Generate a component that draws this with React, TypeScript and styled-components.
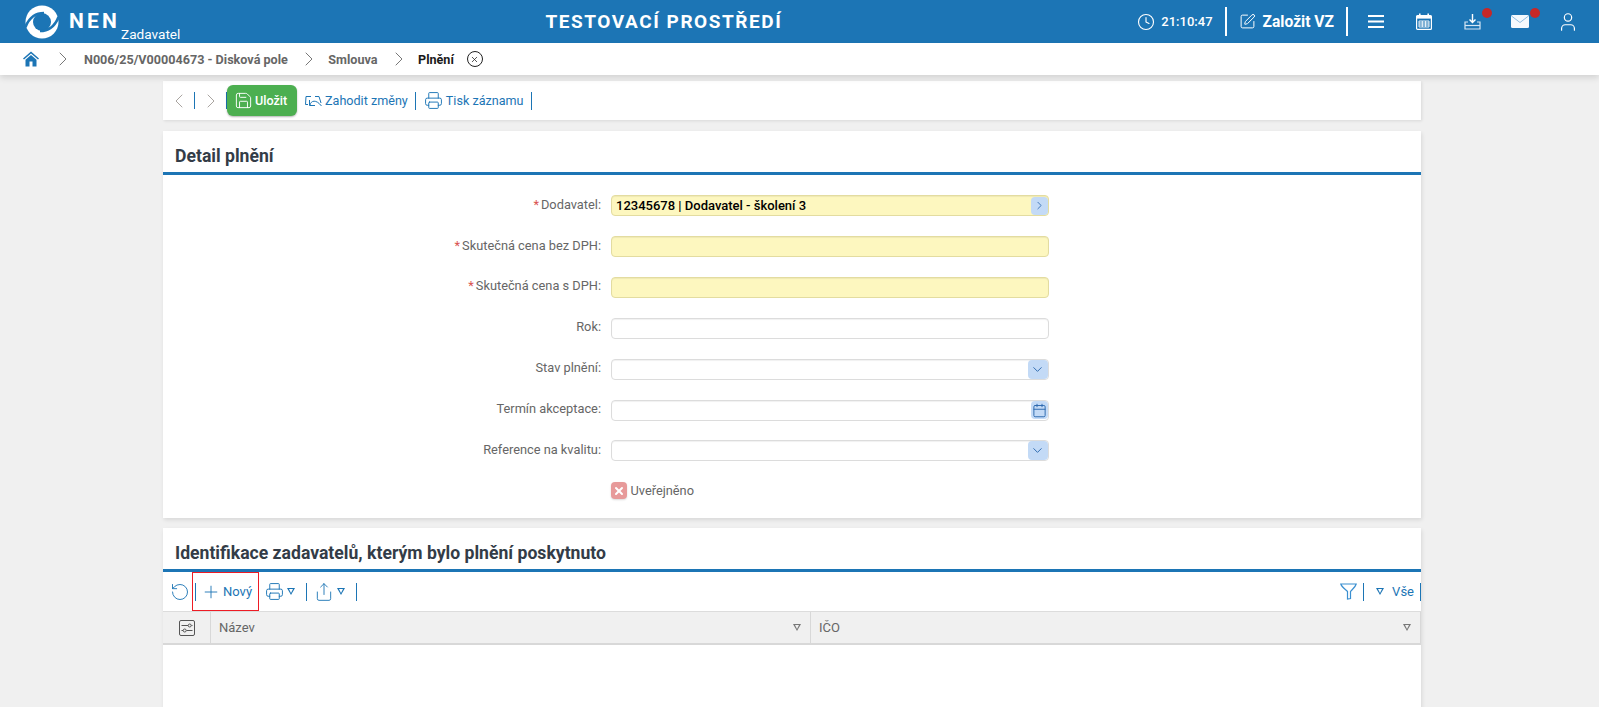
import { Fragment } from "react";
import styled, { createGlobalStyle } from "styled-components";
import {
  Calendar,
  ChevronDown,
  ChevronLeft,
  ChevronRight,
  Clock,
  Plus,
  Printer,
  RotateCcw,
  Save,
  Share,
  SquarePen,
  User,
  X,
} from "lucide-react";

const GlobalStyle = createGlobalStyle`
  html, body {
    margin: 0;
    height: 100%;
    overflow: hidden;
    background: #f0f0f0;
    font-family: Roboto, "Liberation Sans", sans-serif;
    font-size: 13px;
  }
  * { box-sizing: border-box; }
  svg { flex: none; }
`;

const Page = styled.div`
  height: 707px;
  overflow: hidden;
`;

const Header = styled.header`
  height: 43px;
  background: #1c75b5;
  color: #fff;
  display: flex;
  align-items: center;
`;

const Brand = styled.div`
  width: 545.5px;
  height: 43px;
  flex: none;
  display: flex;
  align-items: center;
  padding-left: 25px;
`;

const BrandName = styled.span`
  font-size: 21px;
  font-weight: 700;
  letter-spacing: 3.2px;
  margin-left: 10px;
  margin-top: -2px;
`;

const BrandRole = styled.span`
  font-size: 13.6px;
  align-self: flex-end;
  margin: 0 0 1px 1px;
`;

const EnvTitle = styled.div`
  font-size: 19px;
  font-weight: 700;
  letter-spacing: 1.55px;
  white-space: nowrap;
`;

const HeaderTools = styled.div`
  margin-left: auto;
  display: flex;
  align-items: center;
  padding-right: 7px;
`;

const Time = styled.span`
  font-size: 13px;
  font-weight: 500;
  margin-left: 6px;
`;

const HeaderSep = styled.span`
  width: 2px;
  height: 29px;
  background: #fff;
  margin: 0 12px;
`;

const CreateLabel = styled.span`
  font-size: 15.6px;
  font-weight: 700;
  margin-left: 7px;
`;

const IconGroup = styled.div`
  display: flex;
  align-items: center;
  margin-left: -8px;
`;

const HeaderIcon = styled.span`
  position: relative;
  width: 48px;
  height: 20px;
  display: flex;
  align-items: center;
  justify-content: center;
`;

const Dot = styled.span`
  position: absolute;
  top: -4px;
  left: 34px;
  width: 10px;
  height: 10px;
  border-radius: 50%;
  background: #c62828;
`;

const Crumbs = styled.nav`
  height: 32px;
  background: #fff;
  display: flex;
  align-items: center;
  padding-left: 23px;
  box-shadow: 0 3px 6px rgba(0, 0, 0, 0.12);
  position: relative;
`;

const Crumb = styled.span<{ $current?: boolean }>`
  font-size: 12.6px;
  font-weight: 700;
  color: ${(p) => (p.$current ? "#1a1a1a" : "#666")};
`;

const CrumbChevron = styled(ChevronRight)`
  color: #777;
  margin: 0 7.5px 0 9px;
`;

const HomeChevron = styled(CrumbChevron)`
  margin: 0 9px 0 12px;
`;

const CloseCircle = styled.span`
  width: 16px;
  height: 16px;
  margin-left: 13px;
  border: 1.2px solid #222;
  border-radius: 50%;
  display: flex;
  align-items: center;
  justify-content: center;
  color: #222;
`;

const Content = styled.main`
  width: 1258px;
  margin: 6px 0 0 163px;
  display: flex;
  flex-direction: column;
  gap: 10px;
`;

const ActionBar = styled.div`
  height: 39px;
  margin-bottom: 1px;
  background: #fff;
  display: flex;
  align-items: center;
  padding-left: 4px;
  color: #1c75b5;
  box-shadow: 1px 1px 3px rgba(0, 0, 0, 0.1);
`;

const NavArrow = styled.span`
  display: flex;
  color: #a9a4a0;
`;

const NavSep = styled.span`
  width: 1px;
  height: 17px;
  background: #1c75b5;
  margin: 0 4px 0 3px;
`;

const BarSep = styled.span`
  width: 1px;
  height: 18px;
  background: #1c75b5;
  flex: none;
  margin: 0 8px 0 7px;
`;

const SaveButton = styled.button`
  height: 31px;
  width: 70px;
  margin-left: -4px;
  border: none;
  border-radius: 6px;
  background: #4caf50;
  color: #fff;
  display: flex;
  align-items: center;
  gap: 2px;
  padding: 0 0 0 7px;
  font: 500 12.6px Roboto, sans-serif;
  box-shadow: 0 1px 2px rgba(0, 0, 0, 0.3);
`;

const BarAction = styled.span`
  display: flex;
  align-items: center;
  gap: 3px;
  font-size: 12.6px;
  color: #1c75b5;
`;

const DiscardAction = styled(BarAction)`
  margin-left: 8px;
`;

const Card = styled.section`
  background: #fff;
  box-shadow: 1px 2px 4px rgba(0, 0, 0, 0.1);
`;

const CardTitle = styled.h2`
  margin: 0;
  height: 44px;
  padding: 8px 12px 0;
  display: flex;
  align-items: center;
  font-size: 17.6px;
  font-weight: 700;
  color: #333c47;
  border-bottom: 3px solid #1c75b5;
`;

const Form = styled.div`
  padding: 20px 0 15.5px;
  display: grid;
  grid-template-columns: 438px 438px;
  column-gap: 9.5px;
  row-gap: 19.6px;
  align-items: center;
  grid-auto-rows: 21.3px;
`;

const Label = styled.label`
  text-align: right;
  font-size: 12.8px;
  color: #666;
  padding-bottom: 3px;
`;

const Required = styled.span`
  color: #d9534f;
  margin-right: 2px;
`;

const Field = styled.div<{ $required?: boolean }>`
  height: 21px;
  border-radius: 4px;
  border: 1px solid ${(p) => (p.$required ? "#e3dca0" : "#dcdcdc")};
  background: ${(p) => (p.$required ? "#fdf7bf" : "#fff")};
  box-shadow: inset 0 1px 1px rgba(0, 0, 0, 0.06);
  display: flex;
  align-items: center;
  justify-content: space-between;
  padding-left: 4.5px;
  font-size: 13px;
  font-weight: 500;
  color: #000;
`;

const FieldButton = styled.span<{ $wide?: boolean }>`
  width: ${(p) => (p.$wide ? 20 : 17)}px;
  height: ${(p) => (p.$wide ? 19 : 18)}px;
  border-radius: 4px;
  background: #c3daf6;
  color: #2a66ad;
  display: flex;
  align-items: center;
  justify-content: center;
`;

const CheckRow = styled.div`
  grid-column: 2;
  display: flex;
  align-items: center;
  gap: 4px;
  margin-top: -2px;
  color: #666;
  font-size: 12.8px;
`;

const CheckBox = styled.span`
  width: 16px;
  height: 17px;
  border-radius: 4px;
  background: #e79a9a;
  color: #fff;
  display: flex;
  align-items: center;
  justify-content: center;
  box-shadow: 0 1px 2px rgba(0, 0, 0, 0.15);
`;

const GridCard = styled(Card)`
  height: 300px;
`;

const GridBar = styled.div`
  height: 39px;
  display: flex;
  align-items: center;
  padding-left: 6.5px;
  color: #1c75b5;
`;

const NewButton = styled.span`
  width: 67px;
  height: 39px;
  margin: 0 6px 0 2.5px;
  display: flex;
  align-items: center;
  padding-left: 3px;
  font-size: 13px;
  outline: 1px solid #ee1c25;
  outline-offset: -1px;
  color: #1c75b5;
`;

const NewSep = styled.span`
  width: 1px;
  height: 18px;
  background: #1c75b5;
  margin-right: 5px;
`;

const NewLabel = styled.span`
  margin-left: 2px;
`;

const MenuCaret = styled.span`
  display: inline-block;
  width: 0;
  height: 0;
  border-left: 4px solid transparent;
  border-right: 4px solid transparent;
  border-top: 7px solid currentColor;
  margin-left: 3px;
  position: relative;

  &::after {
    content: "";
    position: absolute;
    left: -2.5px;
    top: -6px;
    border-left: 2.5px solid transparent;
    border-right: 2.5px solid transparent;
    border-top: 4.5px solid #fff;
  }
`;

const HeadCaret = styled(MenuCaret)`
  color: #777;
  &::after {
    border-top-color: #f0f0f0;
  }
`;

const GridSep = styled.span`
  width: 1px;
  height: 18px;
  background: #1c75b5;
  margin: 0 7px 0 11px;
`;

const Spacer = styled.span`
  flex: 1;
`;

const FilterSep = styled.span`
  width: 1px;
  height: 18px;
  background: #1c75b5;
  margin: 0 9px 0 6px;
`;

const AllLabel = styled.span`
  font-size: 13px;
  margin-left: 8px;
  color: #1c75b5;
`;

const EndSep = styled.span`
  width: 1px;
  height: 18px;
  background: #1c75b5;
  margin-left: 6px;
`;

const TableHead = styled.div`
  height: 34px;
  display: grid;
  grid-template-columns: 48px 600px 1fr;
  background: #f0f0f0;
  border-top: 1px solid #dcdcdc;
  border-bottom: 2px solid #d8d8d8;
`;

const HeadCell = styled.div<{ $center?: boolean }>`
  display: flex;
  align-items: center;
  justify-content: ${(p) => (p.$center ? "center" : "space-between")};
  padding: ${(p) => (p.$center ? "0" : "0 9px 0 8px")};
  font-size: 13px;
  color: #666;
  border-right: 1px solid #d8d8d8;
`;

const LogoMark = () => (
  <svg width="34" height="34" viewBox="0 0 34 34" aria-hidden="true">
    <circle cx="17" cy="17" r="16.5" fill="#fff" />
    <circle cx="17" cy="17" r="9" fill="#1c75b5" />
    <path d="M0.5 22C4 13 10 8 19 8" fill="none" stroke="#1c75b5" strokeWidth="2.6" />
    <path d="M33.5 12C30 21 24 26 15 26" fill="none" stroke="#1c75b5" strokeWidth="2.6" />
  </svg>
);

const HomeIcon = () => (
  <svg width="16" height="16" viewBox="0 0 16 16" aria-hidden="true" fill="#1c75b5">
    <path d="M8 0.5L0 7.5L1 8.6L8 2.6L15 8.6L16 7.5Z" />
    <path d="M8 4L2.5 8.7V15.5H6.5V10.5H9.5V15.5H13.5V8.7Z" />
  </svg>
);

const UndoIcon = () => (
  <svg width="17" height="12" viewBox="0 0 17 12" fill="none" stroke="currentColor" strokeWidth="1" aria-hidden="true">
    <path d="M6 1.5H1L0.5 9.5H3" />
    <path d="M5 10C6 5.5 11 4 16.5 11" />
    <path d="M4.5 5V10.5H10" />
    <path d="M10 1.5H14L16 8" />
  </svg>
);

const MenuBars = () => (
  <svg width="16" height="13" viewBox="0 0 16 13" fill="#fff" aria-hidden="true">
    <rect width="16" height="2" />
    <rect y="5.5" width="16" height="2" />
    <rect y="11" width="16" height="2" />
  </svg>
);

const CalendarGrid = () => (
  <svg width="16" height="17" viewBox="0 0 16 17" aria-hidden="true">
    <rect x="0.6" y="2.6" width="14.8" height="13.8" rx="1" fill="none" stroke="#fff" strokeWidth="1.2" />
    <rect x="0.6" y="2.6" width="14.8" height="3" fill="#fff" />
    <rect x="3" y="0.5" width="1.6" height="3.5" fill="#fff" />
    <rect x="11.4" y="0.5" width="1.6" height="3.5" fill="#fff" />
    <path d="M3 8H13V14H3Z M6.3 8V14 M9.6 8V14 M3 10H13 M3 12H13" fill="none" stroke="#fff" strokeWidth="0.9" />
  </svg>
);

const DownloadTray = () => (
  <svg width="17" height="16" viewBox="0 0 17 16" fill="none" aria-hidden="true">
    <path d="M8.5 0V8M5.5 5.5L8.5 8.5L11.5 5.5" stroke="#fff" strokeWidth="1.4" />
    <path d="M4 8H1V15H16V8H13" stroke="#d5e6f5" strokeWidth="1.2" />
    <path d="M1 11.5H16" stroke="#d5e6f5" strokeWidth="1.2" />
  </svg>
);

const MailIcon = () => (
  <svg width="18" height="13" viewBox="0 0 18 13" aria-hidden="true">
    <rect width="18" height="13" rx="1.5" fill="#f4f9fd" />
    <path d="M0.5 1L9 7.5L17.5 1" fill="none" stroke="#8fbde0" strokeWidth="1" />
  </svg>
);

const FunnelIcon = () => (
  <svg width="17" height="17" viewBox="0 0 17 17" fill="none" stroke="#3a8fd0" strokeWidth="1.2" aria-hidden="true">
    <path d="M0.8 1H16.2C15.5 4 12 6.5 10.5 8.5V15.5L7.5 16V8.5C5.5 6.5 1.5 4 0.8 1Z" />
  </svg>
);

const SettingsIcon = () => (
  <svg width="16" height="16" viewBox="0 0 16 16" fill="none" stroke="#555" aria-hidden="true">
    <rect x="0.5" y="0.5" width="15" height="15" rx="1.5" />
    <path d="M2.5 5.5H9M12.5 5.5H13.5M2.5 10.5H4M7.5 10.5H13.5" />
    <circle cx="10.7" cy="5.5" r="1.5" />
    <circle cx="5.7" cy="10.5" r="1.5" />
  </svg>
);

const rows = [
  { label: "Dodavatel:", required: true, value: "12345678 | Dodavatel - školení 3", btn: "next" },
  { label: "Skutečná cena bez DPH:", required: true },
  { label: "Skutečná cena s DPH:", required: true },
  { label: "Rok:" },
  { label: "Stav plnění:", btn: "down" },
  { label: "Termín akceptace:", btn: "date" },
  { label: "Reference na kvalitu:", btn: "down" },
];

const fieldButton = (btn?: string) => {
  if (btn === "next") return <FieldButton><ChevronRight size={13} strokeWidth={1.5} /></FieldButton>;
  if (btn === "down") return <FieldButton $wide><ChevronDown size={15} strokeWidth={1.5} /></FieldButton>;
  if (btn === "date") return <FieldButton><Calendar size={15} strokeWidth={1.5} /></FieldButton>;
  return null;
};

export default function App() {
  return (
    <Page>
      <GlobalStyle />
      <Header>
        <Brand>
          <LogoMark />
          <BrandName>NEN</BrandName>
          <BrandRole>Zadavatel</BrandRole>
        </Brand>
        <EnvTitle>TESTOVACÍ PROSTŘEDÍ</EnvTitle>
        <HeaderTools>
          <Clock size={18} strokeWidth={1.5} />
          <Time>21:10:47</Time>
          <HeaderSep />
          <SquarePen size={17} strokeWidth={1.4} />
          <CreateLabel>Založit VZ</CreateLabel>
          <HeaderSep />
          <IconGroup>
            <HeaderIcon><MenuBars /></HeaderIcon>
            <HeaderIcon><CalendarGrid /></HeaderIcon>
            <HeaderIcon><DownloadTray /><Dot /></HeaderIcon>
            <HeaderIcon><MailIcon /><Dot /></HeaderIcon>
            <HeaderIcon><User size={22} strokeWidth={1.3} /></HeaderIcon>
          </IconGroup>
        </HeaderTools>
      </Header>

      <Crumbs>
        <HomeIcon />
        <HomeChevron size={24} strokeWidth={1} />
        <Crumb>N006/25/V00004673 - Disková pole</Crumb>
        <CrumbChevron size={24} strokeWidth={1} />
        <Crumb>Smlouva</Crumb>
        <CrumbChevron size={24} strokeWidth={1} />
        <Crumb $current>Plnění</Crumb>
        <CloseCircle><X size={9} strokeWidth={2} /></CloseCircle>
      </Crumbs>

      <Content>
        <ActionBar>
          <NavArrow><ChevronLeft size={24} strokeWidth={1} /></NavArrow>
          <NavSep />
          <NavArrow><ChevronRight size={24} strokeWidth={1} /></NavArrow>
          <NavSep />
          <SaveButton><Save size={19} strokeWidth={1.2} />Uložit</SaveButton>
          <DiscardAction><UndoIcon />Zahodit změny</DiscardAction>
          <BarSep />
          <BarAction><Printer size={19} strokeWidth={1.2} />Tisk záznamu</BarAction>
          <BarSep />
        </ActionBar>

        <Card>
          <CardTitle>Detail plnění</CardTitle>
          <Form>
            {rows.map((r) => (
              <Fragment key={r.label}>
                <Label>
                  {r.required && <Required>*</Required>}
                  {r.label}
                </Label>
                <Field $required={r.required}>
                  <span>{r.value}</span>
                  {fieldButton(r.btn)}
                </Field>
              </Fragment>
            ))}
            <CheckRow>
              <CheckBox><X size={12} strokeWidth={4} /></CheckBox>
              Uveřejněno
            </CheckRow>
          </Form>
        </Card>

        <GridCard>
          <CardTitle>Identifikace zadavatelů, kterým bylo plnění poskytnuto</CardTitle>
          <GridBar>
            <RotateCcw size={20} strokeWidth={1.1} />
            <NewButton>
              <NewSep />
              <Plus size={20} strokeWidth={1.1} />
              <NewLabel>Nový</NewLabel>
            </NewButton>
            <Printer size={19} strokeWidth={1.2} />
            <MenuCaret />
            <GridSep />
            <Share size={20} strokeWidth={1.1} />
            <MenuCaret />
            <GridSep />
            <Spacer />
            <FunnelIcon />
            <FilterSep />
            <MenuCaret />
            <AllLabel>Vše</AllLabel>
            <EndSep />
          </GridBar>
          <TableHead>
            <HeadCell $center><SettingsIcon /></HeadCell>
            <HeadCell>Název<HeadCaret /></HeadCell>
            <HeadCell>IČO<HeadCaret /></HeadCell>
          </TableHead>
        </GridCard>
      </Content>
    </Page>
  );
}
